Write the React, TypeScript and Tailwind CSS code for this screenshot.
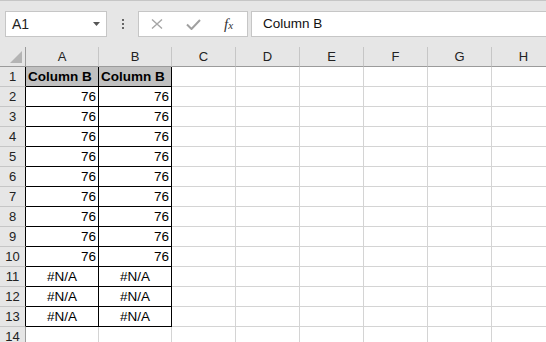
import React from 'react';

const cols = ['A', 'B', 'C', 'D', 'E', 'F', 'G', 'H'];
const rows = Array.from({ length: 14 }, (_, i) => i + 1);

function cellValue(row: number, col: string) {
  if (col !== 'A' && col !== 'B') return null;
  if (row === 1) return { text: 'Column B', align: 'left', bold: true };
  if (row >= 2 && row <= 10) return { text: '76', align: 'right', bold: false };
  if (row >= 11 && row <= 13) return { text: '#N/A', align: 'center', bold: false };
  return null;
}

function Toolbar() {
  return (
    <div className="flex h-[47px] items-start gap-0 border-t border-[#c6c6c6] bg-[#e6e6e6] pt-[10px]">
      <div className="ml-[5px] flex h-[26px] w-[102px] items-center justify-between border border-[#c6c6c6] bg-white pl-[6px] pr-[6px]">
        <span className="text-[14px] text-[#222]">A1</span>
        <svg width="7" height="4" viewBox="0 0 7 4">
          <path d="M0 0 H7 L3.5 4 Z" fill="#555" />
        </svg>
      </div>
      <div className="flex w-[31px] flex-col items-center gap-[2px] pt-[8px]">
        <span className="h-[2px] w-[2px] bg-[#666]" />
        <span className="h-[2px] w-[2px] bg-[#666]" />
        <span className="h-[2px] w-[2px] bg-[#666]" />
      </div>
      <div className="flex h-[26px] w-[110px] items-center border border-[#c6c6c6] bg-white">
        <svg className="ml-[12px]" width="12" height="10" viewBox="0 0 12 10">
          <path d="M1 0.5 L11 9.5 M11 0.5 L1 9.5" stroke="#a6a6a6" strokeWidth="1.4" />
        </svg>
        <svg className="ml-[23px]" width="15" height="11" viewBox="0 0 15 11">
          <path d="M1 5.5 L5.5 10 L14 1" stroke="#a0a0a0" strokeWidth="2" fill="none" />
        </svg>
        <span className="ml-[23px] font-['Liberation_Serif',serif] text-[15px] italic text-[#333]">
          f<span className="text-[11px]">x</span>
        </span>
      </div>
      <div className="ml-[3px] flex h-[26px] flex-1 items-center border border-r-0 border-[#c6c6c6] bg-white pl-[11px]">
        <span className="text-[13.5px] text-[#111]">Column B</span>
      </div>
    </div>
  );
}

export default function App() {
  return (
    <div className="h-[342px] w-[546px] overflow-hidden bg-white font-['Liberation_Sans',Arial,sans-serif]">
      <Toolbar />
      <div className="grid grid-cols-[26px_73px_73px_64px_64px_64px_64px_64px_64px]">
        <div className="relative h-[20px] border-r border-b border-[#9b9b9b] bg-[#e6e6e6]">
          <svg className="absolute bottom-[3px] right-[3px]" width="12" height="12" viewBox="0 0 12 12">
            <path d="M12 0 V12 H0 Z" fill="#b4b4b4" />
          </svg>
        </div>
        {cols.map((c) => (
          <div
            key={c}
            className="flex h-[20px] items-center justify-center border-r border-b border-r-[#c6c6c6] border-b-[#9b9b9b] bg-[#e6e6e6] pt-px text-[13px] text-[#222]"
          >
            {c}
          </div>
        ))}
        {rows.map((r) => (
          <React.Fragment key={r}>
            <div
              className={`flex h-[20px] items-center justify-center border-r border-b border-b-[#c6c6c6] bg-[#e6e6e6] pt-px text-[13px] text-[#222] ${
                r <= 13 ? 'border-r-black' : 'border-r-[#9b9b9b]'
              }`}
            >
              {r}
            </div>
            {cols.map((c) => {
              const v = cellValue(r, c);
              const boxed = (c === 'A' || c === 'B') && r <= 13;
              return (
                <div
                  key={c}
                  className={`flex h-[20px] items-center border-r border-b px-[2px] pt-px text-[13.5px] text-black ${
                    boxed ? 'border-black' : 'border-[#d4d4d4]'
                  } ${r === 1 && boxed ? 'bg-[#c0c0c0]' : ''} ${
                    v?.align === 'right' ? 'justify-end' : v?.align === 'center' ? 'justify-center' : 'justify-start'
                  } ${v?.bold ? 'font-bold text-[12.5px]' : ''}`}
                >
                  {v?.text}
                </div>
              );
            })}
          </React.Fragment>
        ))}
      </div>
    </div>
  );
}
